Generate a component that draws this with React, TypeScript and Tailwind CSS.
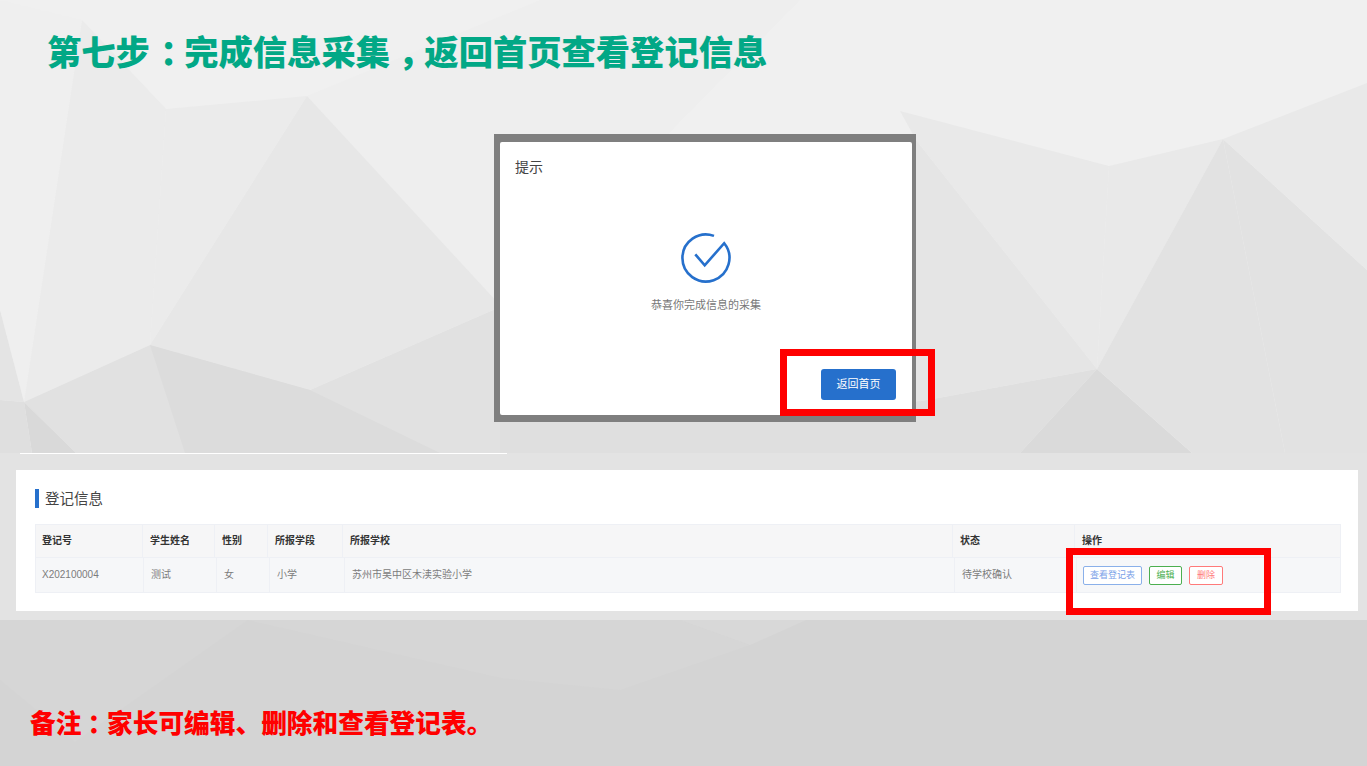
import * as React from "react";

// low-poly backdrop of the slide: [points, fill]
const polys: [string, string][] = [
  ["0,0 82,20 24,402 0,310", "#efefef"],
  ["82,20 166,109 150,345 24,402", "#ebebeb"],
  ["166,109 307,96 150,345", "#ebebeb"],
  ["307,96 540,0 800,0 500,305", "#eeeeee"],
  ["307,96 500,305 500,307 310,390 150,345", "#e7e7e7"],
  ["24,402 150,345 310,390 500,307 500,453 76,453", "#e1e1e1"],
  ["150,345 310,390 440,453 185,453", "#dcdcdc"],
  ["0,310 24,402 0,400", "#e4e4e4"],
  ["0,400 24,402 32,453 0,453", "#dfdfdf"],
  ["24,402 76,453 32,453", "#d9d9d9"],
  ["500,300 920,300 920,453 500,453", "#dfdfdf"],
  ["900,111 1109,166 1097,369 916,140", "#e9e9e9"],
  ["916,140 1097,369 916,402", "#e5e5e5"],
  ["916,402 1097,369 1020,453 916,453", "#dfdfdf"],
  ["1097,369 1192,453 1020,453", "#dadada"],
  ["1109,166 1223,139 1097,369", "#e9e9e9"],
  ["1223,139 1097,369 1192,453 1285,453", "#e2e2e2"],
  ["1223,139 1367,270 1367,453 1285,453", "#e2e2e2"],
  ["1223,139 1367,83 1367,270", "#e9e9e9"],
  ["0,620 248,620 75,742 0,680", "#d6d6d6"],
  ["248,620 680,620 750,645 620,690 501,678", "#d6d6d6"],
  ["680,620 806,620 750,645", "#d8d8d8"],
];

const headers = ["登记号", "学生姓名", "性别", "所报学段", "所报学校", "状态", "操作"];
const cells = ["X202100004", "测试", "女", "小学", "苏州市吴中区木渎实验小学", "待学校确认"];

function RedBox(props: { className: string }) {
  return <div className={"absolute border-[7px] border-[#ff0000] " + props.className} />;
}

export default function App() {
  return (
    <div className="relative w-[1367px] h-[766px] overflow-hidden bg-[#f0f0f0] font-['Liberation_Sans','Noto_Sans_CJK_SC',sans-serif]">
      <svg className="absolute inset-0" width="1367" height="766" viewBox="0 0 1367 766">
        <rect x="0" y="620" width="1367" height="146" fill="#d4d4d4" />
        {polys.map((p) => (
          <polygon key={p[0]} points={p[0]} fill={p[1]} />
        ))}
      </svg>

      <div className="relative flex flex-col h-full">
        {/* top: heading + dialog */}
        <div className="h-[453px] shrink-0">
          <h1 className="pl-[47px] pt-[28px] text-[34.3px] leading-[50px] font-black text-[#02a886] whitespace-nowrap">
            第七步<span className="ml-[10px] tracking-[-10px]">：</span>完成信息采集
            <span className="ml-[8px] tracking-[-8px]">，</span>返回首页查看登记信息
          </h1>

          <div className="relative mt-[56px] ml-[494px] w-[422px] h-[288px] bg-[#7f7f7f] pl-[6px] pr-[4px] pt-[8px] pb-[7px]">
            <div className="flex flex-col h-full bg-white rounded-[2px] pl-[15px] pr-[16px]">
              <div className="mt-[15px] text-[14px] leading-[20px] text-[#444]">提示</div>
              <svg className="mt-[56px] self-center ml-[1px]" width="50" height="50" viewBox="0 0 50 50" fill="none" stroke="#2670cc" strokeWidth="2.6">
                <path d="M33 2.9A23.5 23.5 0 1 0 43.2 10.2L23.7 32.3L14.3 21.3" />
              </svg>
              <div className="mt-[14px] text-center text-[11px] leading-[16px] text-[#777] ml-[1px]">恭喜你完成信息的采集</div>
              <button className="mt-[56px] self-end w-[75px] h-[31px] rounded-[3px] bg-[#2670cc] text-white text-[11px]">返回首页</button>
            </div>
            <RedBox className="left-[286px] top-[215px] w-[155px] h-[67px]" />
          </div>
        </div>

        {/* middle: registration table */}
        <div className="relative h-[167px] shrink-0 bg-[#e3e3e3] pt-[17px] pl-[16px]">
          <div className="absolute left-[20px] top-0 w-[487px] h-px bg-white" />
          <div className="w-[1342px] h-[141px] bg-white pt-[19px] pl-[19px]">
            <div className="flex items-center h-[19px] gap-[6px]">
              <div className="w-[4px] h-[19px] bg-[#2670cc]" />
              <span className="text-[14.5px] text-[#444] pt-[2px]">登记信息</span>
            </div>
            <div className="mt-[16px] w-[1306px] border border-[#eef0f5] text-[10px]">
              <div className="grid grid-cols-[107px_72px_53px_75px_610px_122px_1fr] h-[33px] bg-[#f6f6f7] font-bold text-[#333] border-b border-[#eef0f5]">
                {headers.map((h, i) => (
                  <div key={h} className={"flex items-center pb-[2px] border-r border-[#eef0f5] last:border-r-0 " + (i === 0 ? "pl-[6px]" : "pl-[7px]")}>{h}</div>
                ))}
              </div>
              <div className="grid grid-cols-[108px_73px_53px_75px_610px_122px_1fr] h-[34px] bg-[#f6f7f9] text-[#7c7c7c]">
                {cells.map((c, i) => (
                  <div key={c} className={"flex items-center pb-[2px] border-r border-[#eef0f5] " + (i === 0 ? "pl-[6px]" : "pl-[7px]")}>{c}</div>
                ))}
                <div className="flex items-center gap-[7px] pl-[6px] text-[9px]">
                  <div className="flex items-center justify-center w-[59px] h-[19px] rounded-[2px] bg-white border border-[#8ab0ea] text-[#7aa2e8] pt-[1px]">查看登记表</div>
                  <div className="flex items-center justify-center w-[33px] h-[19px] rounded-[2px] bg-white border border-[#4caf50] text-[#4caf50] pt-[1px]">编辑</div>
                  <div className="flex items-center justify-center w-[34px] h-[19px] rounded-[2px] bg-white border border-[#ff7a7a] text-[#ff7a7a] pt-[1px]">删除</div>
                </div>
              </div>
            </div>
          </div>
          <RedBox className="left-[1066px] top-[95px] w-[205px] h-[67px]" />
        </div>

        {/* bottom: note */}
        <div className="pl-[30px] pt-[86px] text-[25.7px] leading-[36px] font-black text-[#ff0000] whitespace-nowrap">
          备注<span className="ml-[6px] tracking-[-6px]">：</span>家长可编辑、删除和查看登记表。
        </div>
      </div>
    </div>
  );
}
